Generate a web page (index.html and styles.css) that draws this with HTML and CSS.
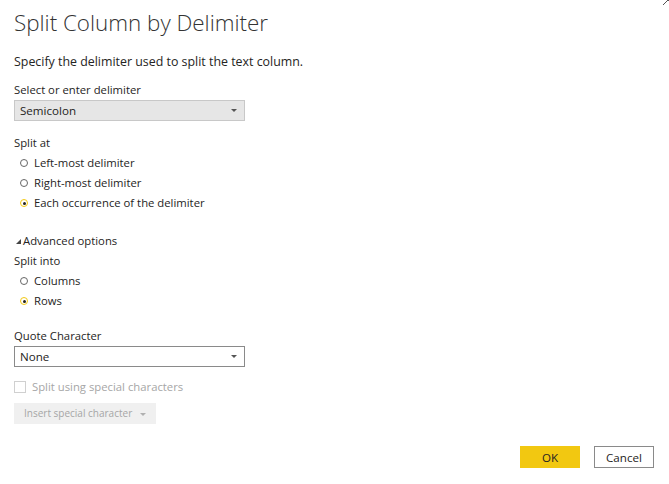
FILE: index.html
```html
<!DOCTYPE html>
<html lang="en">
<head>
  <meta charset="UTF-8" />
  <title>Split Column by Delimiter</title>
  <link rel="stylesheet" href="styles.css">
</head>
<body>
  <div class="dialog">
    <svg class="close" width="12" height="12" viewBox="0 0 12 12"><path d="M1 1 L11 11 M11 1 L1 11" stroke="#555" stroke-width="1" fill="none"/></svg>
    <h1 class="title">Split Column by Delimiter</h1>
    <p class="desc">Specify the delimiter used to split the text column.</p>

    <div class="label">Select or enter delimiter</div>
    <div class="select filled">
      <span>Semicolon</span>
      <span class="caret"></span>
    </div>

    <div class="group split-at">
      <div class="label">Split at</div>
      <div class="radio"><span class="dot"></span>Left-most delimiter</div>
      <div class="radio"><span class="dot"></span>Right-most delimiter</div>
      <div class="radio on"><span class="dot"></span>Each occurrence of the delimiter</div>
    </div>

    <div class="advanced"><span class="tri"></span>Advanced options</div>
    <div class="group">
      <div class="label">Split into</div>
      <div class="radio"><span class="dot"></span>Columns</div>
      <div class="radio on"><span class="dot"></span>Rows</div>
    </div>

    <div class="label quote">Quote Character</div>
    <div class="select">
      <span>None</span>
      <span class="caret"></span>
    </div>

    <div class="check"><span class="box"></span>Split using special characters</div>
    <div class="insert">Insert special character <span class="caret light"></span></div>

    <div class="footer">
      <button class="btn ok">OK</button>
      <button class="btn cancel">Cancel</button>
    </div>
  </div>
</body>
</html>
```

FILE: styles.css
```css
html, body {
  margin: 0;
  height: 100%;
}
body {
  font-family: "Open Sans", "Noto Sans", sans-serif;
  font-size: 11.3px;
  color: #252423;
  background: #fff;
}
.dialog {
  position: relative;
  height: 100%;
  box-sizing: border-box;
  padding: 0 15px 16px 14px;
  display: flex;
  flex-direction: column;
  overflow: hidden;
}
.close {
  position: absolute;
  top: -6px;
  right: -5px;
}
.title {
  margin: 6px 0 0;
  font-size: 22.4px;
  font-weight: 300;
  line-height: 34px;
  color: #333;
}
.desc {
  margin: 12px 0 0;
  font-size: 12.4px;
  line-height: 20px;
}
.label {
  line-height: 20px;
}
.desc + .label {
  margin-top: 8px;
}
.select {
  height: 19px;
  border: 1px solid #8a8a8a;
  display: flex;
  align-items: center;
  justify-content: space-between;
  padding: 0 7px 0 5px;
  width: 217px;
  font-size: 11.6px;
}
.select.filled {
  background: #e6e6e6;
  border-color: #c8c8c8;
}
.caret {
  width: 0;
  height: 0;
  border-left: 3px solid transparent;
  border-right: 3px solid transparent;
  border-top: 3px solid #555;
}
.caret.light {
  border-top-color: #b0b0b0;
  display: inline-block;
  margin-left: 5px;
  vertical-align: middle;
}
.group {
  display: flex;
  flex-direction: column;
}
.split-at {
  margin-top: 12px;
}
.radio {
  display: flex;
  align-items: center;
  line-height: 20px;
  padding-left: 6px;
}
.dot {
  width: 6px;
  height: 6px;
  border: 1.5px solid #666;
  border-radius: 50%;
  margin-right: 6px;
  display: flex;
  align-items: center;
  justify-content: center;
}
.radio.on .dot {
  border-color: #f2c811;
}
.radio.on .dot::after {
  content: "";
  width: 3px;
  height: 3px;
  border-radius: 50%;
  background: #222;
}
.advanced {
  margin-top: 18px;
  line-height: 20px;
  display: flex;
  align-items: center;
  padding-left: 2px;
}
.tri {
  width: 0;
  height: 0;
  border-left: 5px solid transparent;
  border-bottom: 5px solid #444;
  margin-right: 2px;
}
.quote {
  margin-top: 15px;
}
.check {
  margin-top: 10px;
  line-height: 20px;
  display: flex;
  align-items: center;
  color: #a6a6a6;
}
.box {
  width: 10px;
  height: 10px;
  border: 1px solid #d0d0d0;
  margin-right: 6px;
}
.insert {
  margin-top: 6px;
  align-self: flex-start;
  background: #f0f0f0;
  color: #a6a6a6;
  font-size: 10px;
  height: 21px;
  line-height: 21px;
  padding: 0 10px;
}
.footer {
  margin-top: auto;
  display: flex;
  justify-content: flex-end;
  gap: 14px;
}
.btn {
  width: 60px;
  height: 22px;
  font: inherit;
  font-size: 11.6px;
  color: #252423;
  padding: 0;
  box-sizing: border-box;
}
.ok {
  background: #f2c811;
  border: none;
}
.cancel {
  background: #fff;
  border: 1px solid #8a8a8a;
}
```
